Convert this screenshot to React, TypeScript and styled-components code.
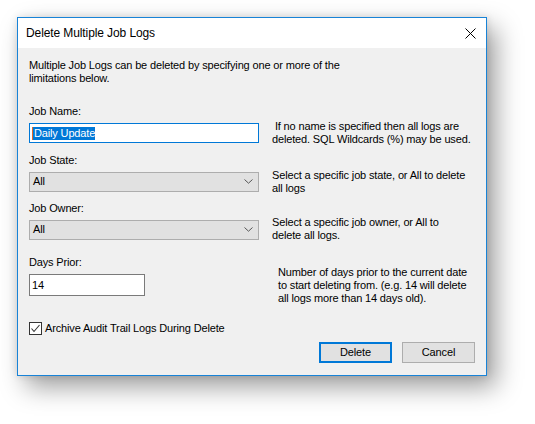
import styled, { createGlobalStyle } from 'styled-components'

const GlobalStyle = createGlobalStyle`
  html, body {
    margin: 0;
    background: #ffffff;
  }
  body {
    font-family: 'Liberation Sans', Arial, sans-serif;
    font-size: 11px;
    letter-spacing: -0.15px;
    color: #000000;
  }
`

const CloseIcon = () => (
  <svg width="11" height="11" viewBox="0 0 11 11">
    <path d="M0.5 0.5 L10.5 10.5 M10.5 0.5 L0.5 10.5" stroke="#000" strokeWidth="1" fill="none" />
  </svg>
)

const Chevron = () => (
  <svg width="9" height="5" viewBox="0 0 9 5">
    <path d="M0.5 0.5 L4.5 4.2 L8.5 0.5" stroke="#555" strokeWidth="1" fill="none" />
  </svg>
)

const CheckMark = () => (
  <svg width="11" height="11" viewBox="0 0 11 11">
    <path d="M1.5 5.5 L4 8.5 L9.5 2" stroke="#333" strokeWidth="1.1" fill="none" />
  </svg>
)

const Select = ({ value }: { value: string }) => (
  <ComboBox>
    <span>{value}</span>
    <Chevron />
  </ComboBox>
)

export default function App() {
  return (
    <Page>
      <GlobalStyle />
      <Dialog>
        <TitleBar>
          <Title>Delete Multiple Job Logs</Title>
          <CloseIcon />
        </TitleBar>

        <Body>
          <Intro>
            Multiple Job Logs can be deleted by specifying one or more of the<br />
            limitations below.
          </Intro>

          <Field $gap={20} $rowHeight={20}>
            <Label>Job Name:</Label>
            <TextBox $focused $width={230}>
              <Selected>Daily Update</Selected>
            </TextBox>
            <Help $shift={-3}>
              &nbsp;If no name is specified then all logs are<br />
              deleted. SQL Wildcards (%) may be used.
            </Help>
          </Field>

          <Field $gap={11} $rowHeight={20}>
            <Label>Job State:</Label>
            <Select value="All" />
            <Help $shift={-3}>
              Select a specific job state, or All to delete<br />
              all logs
            </Help>
          </Field>

          <Field $gap={10} $rowHeight={20}>
            <Label>Job Owner:</Label>
            <Select value="All" />
            <Help $shift={-4}>
              Select a specific job owner, or All to<br />
              delete all logs.
            </Help>
          </Field>

          <Field $gap={16} $rowHeight={22}>
            <Label>Days Prior:</Label>
            <TextBox $width={116}>14</TextBox>
            <Help $shift={-8} $indent={6}>
              Number of days prior to the current date<br />
              to start deleting from. (e.g. 14 will delete<br />
              all logs more than 14 days old).
            </Help>
          </Field>

          <CheckRow>
            <CheckBox>
              <CheckMark />
            </CheckBox>
            Archive Audit Trail Logs During Delete
          </CheckRow>

          <ButtonRow>
            <Button $primary>Delete</Button>
            <Button>Cancel</Button>
          </ButtonRow>
        </Body>
      </Dialog>
    </Page>
  )
}

const Page = styled.div`
  box-sizing: border-box;
  min-height: 100vh;
  padding: 17px 0 0 17px;
  overflow: hidden;
`

const Dialog = styled.div`
  width: 470px;
  box-sizing: border-box;
  border: 1px solid #1883d7;
  background: #f0f0f0;
  box-shadow: 9px 11px 24px rgba(0, 0, 0, 0.38), 0 0 8px rgba(0, 0, 0, 0.12);
`

const TitleBar = styled.div`
  height: 30px;
  background: #ffffff;
  display: flex;
  align-items: center;
  justify-content: space-between;
  padding: 0 10px 0 8px;
`

const Title = styled.div`
  font-size: 12px;
  letter-spacing: -0.1px;
  line-height: 14px;
`

const Body = styled.div`
  display: flex;
  flex-direction: column;
  padding: 11px 11px 12px 11px;
  line-height: 13px;
`

const Intro = styled.div`
  white-space: nowrap;
`

const Field = styled.div<{ $gap: number, $rowHeight: number }>`
  display: grid;
  grid-template-columns: 230px 1fr;
  grid-template-rows: 13px ${p => p.$rowHeight}px;
  column-gap: 13px;
  row-gap: 5px;
  margin-top: ${p => p.$gap}px;
  align-items: start;
`

const Label = styled.div`
  grid-column: 1 / 3;
`

const TextBox = styled.div<{ $focused?: boolean, $width: number }>`
  box-sizing: border-box;
  width: ${p => p.$width}px;
  height: 100%;
  background: #ffffff;
  border: 1px solid ${p => p.$focused ? '#0078d7' : '#7a7a7a'};
  padding: 0 2px;
  display: flex;
  align-items: center;
`

const Selected = styled.span`
  background: #0078d7;
  color: #ffffff;
  border-left: 1px solid #e06a2a;
  padding: 0 0 0 1px;
  line-height: 13px;
`

const ComboBox = styled.div`
  box-sizing: border-box;
  width: 230px;
  height: 20px;
  background: #e1e1e1;
  border: 1px solid #adadad;
  display: flex;
  align-items: center;
  justify-content: space-between;
  padding: 0 5px 1px 3px;
`

const Help = styled.div<{ $shift: number, $indent?: number }>`
  white-space: nowrap;
  margin-top: ${p => p.$shift}px;
  margin-left: ${p => p.$indent ?? 0}px;
`

const CheckRow = styled.div`
  display: flex;
  align-items: center;
  gap: 3px;
  margin-top: 26px;
  height: 13px;
  white-space: nowrap;
`

const CheckBox = styled.div`
  box-sizing: border-box;
  width: 13px;
  height: 13px;
  border: 1px solid #333333;
  background: #ffffff;
  display: flex;
  align-items: center;
  justify-content: center;
`

const ButtonRow = styled.div`
  display: flex;
  justify-content: flex-end;
  gap: 10px;
  margin-top: 7px;
`

const Button = styled.div<{ $primary?: boolean }>`
  box-sizing: border-box;
  width: 73px;
  height: 21px;
  background: #e1e1e1;
  border: ${p => p.$primary ? '2px solid #0078d7' : '1px solid #adadad'};
  display: flex;
  align-items: center;
  justify-content: center;
`
